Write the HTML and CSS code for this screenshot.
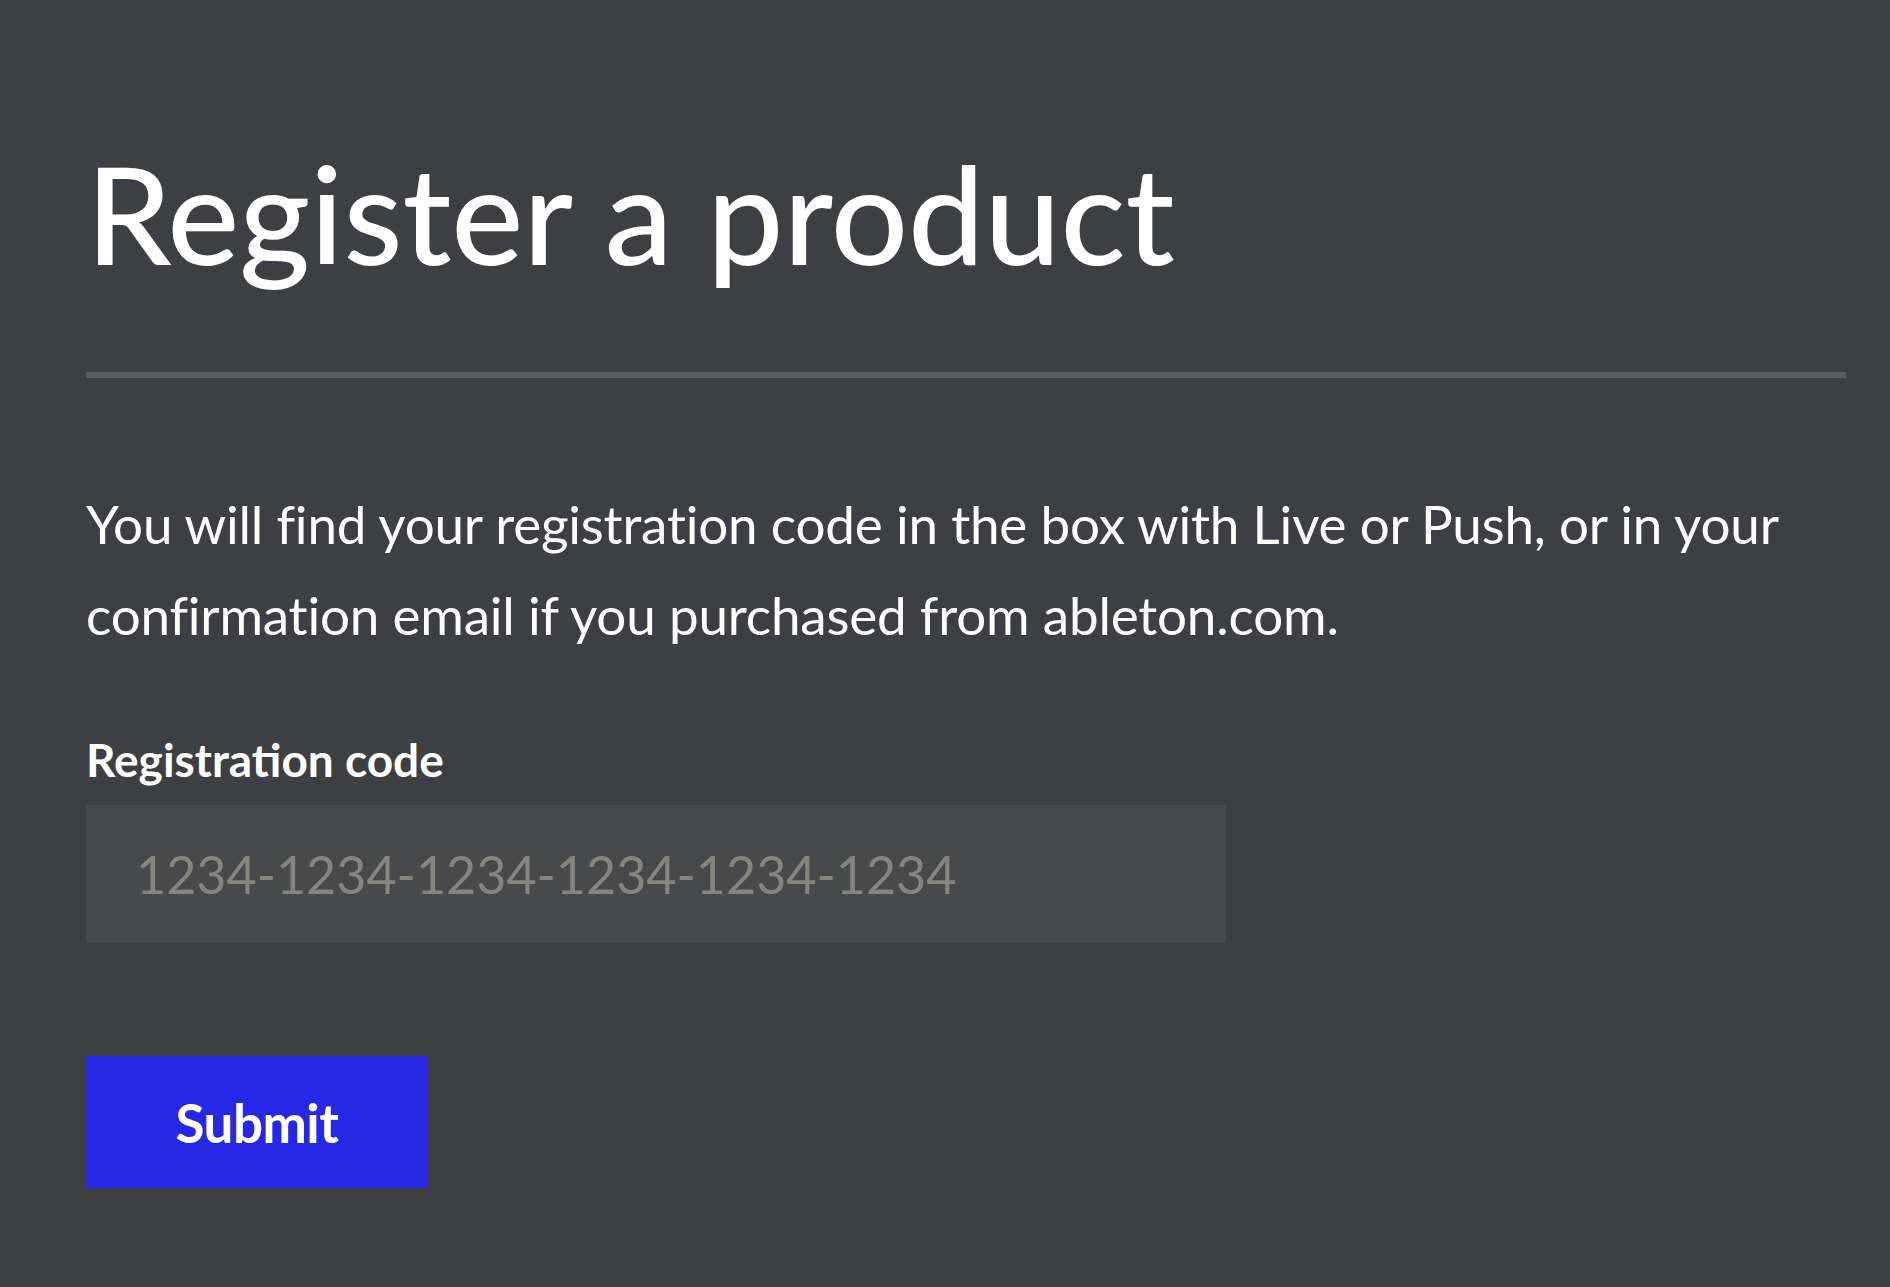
FILE: index.html
```html
<!DOCTYPE html>
<html lang="en">
<head>
<meta charset="utf-8">
<title>Register a product</title>
<link rel="stylesheet" href="styles.css">
</head>
<body>
<main class="page">
  <h1 class="title">Register a product</h1>
  <div class="divider"></div>
  <p class="intro">You will find your registration code in the box with Live or Push, or in your confirmation email if you purchased from ableton.com.</p>
  <form class="form">
    <label class="label" for="code">Registration code</label>
    <input class="input" id="code" type="text" placeholder="1234-1234-1234-1234-1234-1234">
    <button class="submit" type="button">Submit</button>
  </form>
</main>
</body>
</html>
```
FILE: styles.css
```css
html, body {
  margin: 0;
  padding: 0;
  background: #3e3f42;
}
body {
  font-family: Lato, "Open Sans", sans-serif;
  color: #ffffff;
}
.page {
  padding: 145px 44px 0 86px;
}
.title {
  margin: 0;
  font-size: 136px;
  line-height: 136px;
  font-weight: 500;
  letter-spacing: 0;
}
.divider {
  margin-top: 91px;
  height: 6px;
  background: #5a5d61;
}
.intro {
  margin: 100px 0 0;
  font-size: 53px;
  line-height: 91px;
  font-weight: 400;
  letter-spacing: -0.2px;
}
.form {
  display: flex;
  flex-direction: column;
  align-items: flex-start;
  margin-top: 73px;
}
.label {
  font-size: 46px;
  line-height: 54px;
  font-weight: 700;
}
.input {
  box-sizing: border-box;
  margin-top: 18px;
  width: 1140px;
  height: 138px;
  padding: 0 0 0 50px;
  border: none;
  outline: none;
  background: #48494b;
  color: #ffffff;
  font-family: Lato, "Open Sans", sans-serif;
  font-size: 52px;
  font-weight: 400;
}
.input::placeholder {
  color: #86857f;
  opacity: 1;
}
.submit {
  margin-top: 113px;
  width: 342px;
  height: 132px;
  border: none;
  padding: 0;
  background: #2727e5;
  color: #ffffff;
  font-family: Lato, "Open Sans", sans-serif;
  font-size: 53px;
  font-weight: 700;
  letter-spacing: -0.5px;
  cursor: pointer;
}
```
